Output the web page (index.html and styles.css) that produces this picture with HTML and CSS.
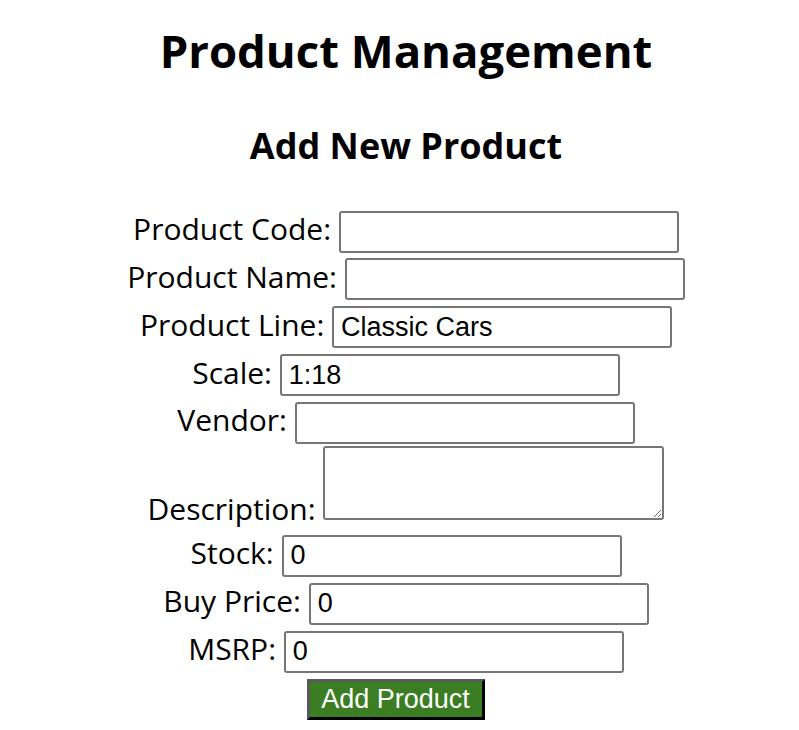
FILE: index.html
```html
<!DOCTYPE html>
<html lang="en">
<head>
<meta charset="utf-8">
<title>Product Management</title>
<link rel="stylesheet" href="styles.css">
</head>
<body>
<h1 class="title">Product Management</h1>
<h2 class="subtitle">Add New Product</h2>
<form class="product-form">
  <div class="row"><label for="code">Product Code:</label> <input class="field" id="code" type="text" value=""></div>
  <div class="row"><label for="name">Product Name:</label> <input class="field" id="name" type="text" value=""></div>
  <div class="row"><label for="line">Product Line:</label> <input class="field" id="line" type="text" value="Classic Cars"></div>
  <div class="row"><label for="scale">Scale:</label> <input class="field" id="scale" type="text" value="1:18"></div>
  <div class="row"><label for="vendor">Vendor:</label> <input class="field" id="vendor" type="text" value=""></div>
  <div class="row"><label for="desc">Description:</label> <textarea class="area" id="desc"></textarea></div>
  <div class="row"><label for="stock">Stock:</label> <input class="field" id="stock" type="text" value="0"></div>
  <div class="row"><label for="buy">Buy Price:</label> <input class="field" id="buy" type="text" value="0"></div>
  <div class="row"><label for="msrp">MSRP:</label> <input class="field" id="msrp" type="text" value="0"></div>
  <div class="row"><button class="submit" type="button">Add Product</button></div>
</form>
</body>
</html>
```

FILE: styles.css
```css
html, body {
  background: #ffffff;
}
body {
  margin: 0 0 0 13px;
  font-family: "Open Sans", "Noto Sans", sans-serif;
  color: #000000;
  text-align: center;
}
.title {
  font-size: 45.5px;
  font-weight: 700;
  line-height: 56px;
  margin: 22px 0 0;
}
.subtitle {
  font-size: 36px;
  font-weight: 700;
  line-height: 44px;
  margin: 46px 0 0;
}
.product-form {
  margin: 39px 0 0;
}
.row {
  font-size: 30px;
  line-height: 44px;
}
.field {
  box-sizing: border-box;
  width: 340px;
  height: 42px;
  border: 2px solid #767676;
  border-radius: 3px;
  padding: 0 6px 0 7px;
  margin: 0 0 2.36px;
  font-family: "Liberation Sans", Arial, sans-serif;
  font-size: 27px;
  color: #000000;
  background: #ffffff;
  vertical-align: baseline;
}
.area {
  box-sizing: border-box;
  width: 341px;
  height: 74px;
  border: 2px solid #767676;
  border-radius: 3px;
  padding: 3px 6px;
  margin: 0;
  font-family: "Liberation Mono", monospace;
  font-size: 20px;
  background: #ffffff;
  vertical-align: baseline;
}
.submit {
  box-sizing: border-box;
  width: 178px;
  height: 41px;
  padding: 2px 0;
  margin: 0 21px 0 0;
  border-style: solid;
  border-width: 3px;
  border-color: #595959 #000000 #000000 #595959;
  background: #3a7d22;
  color: #ffffff;
  font-family: "Liberation Sans", Arial, sans-serif;
  font-size: 27px;
  line-height: 31px;
  vertical-align: baseline;
}
```
